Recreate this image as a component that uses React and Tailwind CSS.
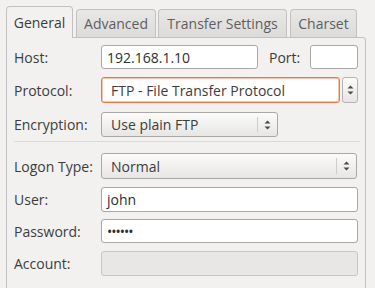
import React from 'react';

const font = { fontFamily: '"Open Sans", "Noto Sans", sans-serif' };

const Arrows = () => (
    <svg width="7" height="12" viewBox="0 0 7 12" className="shrink-0">
        <path d="M0.5 4.5 L3.5 1.5 L6.5 4.5 Z" fill="#4a4a4a" />
        <path d="M0.5 7.5 L3.5 10.5 L6.5 7.5 Z" fill="#4a4a4a" />
    </svg>
);

const Tab = ({ label, active, width }) => {
    if (active) {
        return (
            <div
                className={`${width} h-[32px] -mb-px relative z-10 flex items-center justify-center bg-[#f2f1f0] border border-b-0 border-[#c3c1bf] rounded-t-[4px] text-[#3c3c3c]`}
            >
                {label}
            </div>
        );
    }
    return (
        <div
            className={`${width} h-[28px] flex items-center justify-center bg-gradient-to-b from-[#e9e8e7] to-[#dcdbd9] border border-b-0 border-[#c3c1bf] rounded-t-[4px] text-[#5e5e5e]`}
        >
            {label}
        </div>
    );
};

const Row = ({ label, className, children }) => (
    <div className={`flex items-center ${className}`}>
        <div className="w-[87px] shrink-0 text-[#3c3c3c]">{label}</div>
        {children}
    </div>
);

const Entry = ({ value, className, disabled }) => (
    <div
        className={`flex items-center px-[5px] border rounded-[3px] ${
            disabled ? 'bg-[#e8e7e6] border-[#c8c6c4]' : 'bg-white border-[#a9a8a6]'
        } ${className}`}
    >
        <span className="text-[#2e2e2e] whitespace-nowrap">{value}</span>
    </div>
);

const Combo = ({ value, className, sepRight = true }) => (
    <div
        className={`flex items-center border border-[#a9a8a6] rounded-[3px] bg-gradient-to-b from-[#fbfbfa] to-[#e7e6e5] ${className}`}
    >
        <span className="flex-1 pl-[9px] text-[#3c3c3c] whitespace-nowrap">{value}</span>
        {sepRight && <div className="w-px self-stretch my-[4px] bg-[#cfcdcb]" />}
        <div className="w-[19px] flex justify-center">
            <Arrows />
        </div>
    </div>
);

export default function App() {
    return (
        <div className="w-[375px] h-[288px] overflow-hidden bg-[#f2f1f0] pt-[6px] pl-[6px] text-[14px]" style={font}>
            <div className="flex items-end h-[31px]">
                <Tab label="General" active width="w-[67px]" />
                <div className="w-[3px]" />
                <Tab label="Advanced" width="w-[80px]" />
                <div className="w-[2px]" />
                <Tab label="Transfer Settings" width="w-[129px]" />
                <div className="w-[3px]" />
                <Tab label="Charset" width="w-[67px]" />
            </div>
            <div className="w-[360px] h-[260px] border border-[#c3c1bf] rounded-tr-[3px] bg-[#f2f1f0] pl-[7px] pt-[7px]">
                <Row label="Host:" className="h-[24px]">
                    <Entry value="192.168.1.10" className="w-[157px] h-[24px]" />
                    <div className="w-[52px] pl-[11px] text-[#3c3c3c]">Port:</div>
                    <Entry value="" className="w-[48px] h-[24px]" />
                </Row>
                <Row label="Protocol:" className="h-[26px] mt-[8px]">
                    <div className="w-[239px] h-[26px] flex items-center border border-[#e9774a] rounded-[3px] bg-white shadow-[inset_0_0_0_1px_#f7c3ab] pl-[9px]">
                        <span className="text-[#3c3c3c] whitespace-nowrap">FTP - File Transfer Protocol</span>
                    </div>
                    <div className="ml-[2px] w-[16px] h-[26px] flex items-center justify-center border border-[#b5b3b1] rounded-[3px] bg-gradient-to-b from-[#fbfbfa] to-[#e7e6e5]">
                        <Arrows />
                    </div>
                </Row>
                <Row label="Encryption:" className="h-[25px] mt-[9px]">
                    <Combo value="Use plain FTP" className="w-[177px] h-[25px]" />
                </Row>
                <div className="mt-[4px] w-[346px] h-px bg-[#dcdad8]" />
                <Row label="Logon Type:" className="h-[26px] mt-[11px]">
                    <Combo value="Normal" className="w-[256px] h-[26px]" />
                </Row>
                <Row label="User:" className="h-[25px] mt-[8px]">
                    <Entry value="john" className="w-[257px] h-[25px]" />
                </Row>
                <Row label="Password:" className="h-[24px] mt-[7px]">
                    <Entry value="••••••" className="w-[257px] h-[24px] tracking-[-1px]" />
                </Row>
                <Row label="Account:" className="h-[25px] mt-[8px]">
                    <Entry value="" disabled className="w-[257px] h-[25px]" />
                </Row>
            </div>
        </div>
    );
}
